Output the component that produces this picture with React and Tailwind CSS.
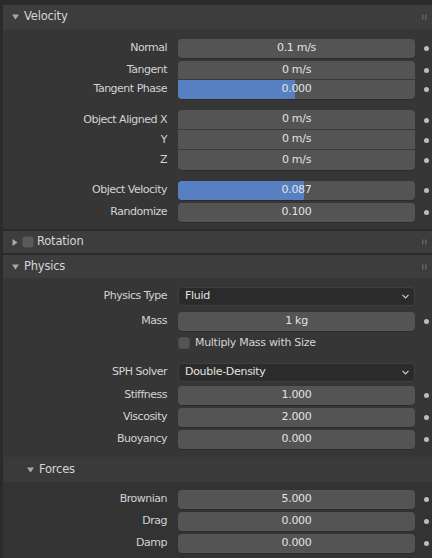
import React from "react";

const font = { fontFamily: '"DejaVu Sans", "Liberation Sans", sans-serif' };

function DownTri({ className = "" }) {
  return (
    <svg width="7" height="6" viewBox="0 0 7 6" className={className}>
      <polygon points="0,0.5 7,0.5 3.5,5.5" fill="#a8a8a8" />
    </svg>
  );
}
function RightTri() {
  return (
    <svg width="6" height="7" viewBox="0 0 6 7">
      <polygon points="0.5,0 5.5,3.5 0.5,7" fill="#a8a8a8" />
    </svg>
  );
}
function Grip() {
  return (
    <svg width="5" height="5" viewBox="0 0 5 5" className="absolute right-[2px]">
      {[0, 2, 4].map((y) =>
        [0, 3].map((x) => <rect key={x + "-" + y} x={x} y={y} width="1.5" height="1" fill="#8a8a8a" />)
      )}
    </svg>
  );
}
function Dot() {
  return <div className="w-[5px] h-[5px] rounded-full bg-[#bdbdbd] ml-[9px]" />;
}

function Header({ title, open = true, checkbox = false, h = "h-[24px]" }) {
  return (
    <div className={`relative flex items-center ${h} bg-[#3d3d3d] pl-[8px]`}>
      <div className="w-[8px] flex justify-center">{open ? <DownTri /> : <RightTri />}</div>
      {checkbox && <div className="ml-[3px] w-[12px] h-[12px] rounded-[3px] bg-[#5a5a5a] border border-[#4a4a4a]" />}
      <span className={`${checkbox ? "ml-[3px]" : "ml-[5px]"} text-[11.5px] tracking-[-0.2px] text-[#d6d6d6]`}>{title}</span>
      <div className="absolute right-[3px] top-1/2 -translate-y-1/2 w-[5px] h-[5px]">
        <Grip />
      </div>
    </div>
  );
}

function Label({ children }) {
  return <div className="w-[164px] text-right text-[11px] text-[#d4d4d4] tracking-[-0.5px] shrink-0">{children}</div>;
}

function Field({ value, fill, pos = "single", h = "h-[19px]" }) {
  const rounding =
    pos === "single" ? "rounded-[4px]" : pos === "top" ? "rounded-t-[4px]" : pos === "bottom" ? "rounded-b-[4px]" : "";
  const border = pos === "top" || pos === "mid" ? "border-b border-b-[#3a3a3a]" : "";
  return (
    <div className={`relative w-[237px] ${h} bg-[#545454] ${rounding} ${border} overflow-hidden shadow-[0_1px_0_#2c2c2c] flex items-center justify-center`}>
      {fill !== undefined && (
        <div className="absolute left-0 top-0 bottom-0 bg-[#5680c2]" style={{ width: fill }} />
      )}
      <span className="relative text-[11px] tracking-[-0.3px] text-[#e2e2e2]">{value}</span>
    </div>
  );
}

function Row({ label, value, fill, pos, mt = "", h }) {
  return (
    <div className={`flex items-center ${mt}`}>
      <Label>{label}</Label>
      <div className="ml-[11px]">
        <Field value={value} fill={fill} pos={pos} h={h} />
      </div>
      <Dot />
    </div>
  );
}

function Dropdown({ label, value, mt = "" }) {
  return (
    <div className={`flex items-center ${mt}`}>
      <Label>{label}</Label>
      <div className="ml-[11px] w-[237px] h-[19px] rounded-[4px] bg-[#2b2b2b] border border-[#3f3f3f] flex items-center justify-between pl-[6px] pr-[5px]">
        <span className="text-[11px] tracking-[-0.3px] text-[#e2e2e2]">{value}</span>
        <svg width="7" height="5" viewBox="0 0 7 5">
          <polyline points="0.5,0.8 3.5,3.8 6.5,0.8" fill="none" stroke="#cfcfcf" strokeWidth="1.2" />
        </svg>
      </div>
    </div>
  );
}

export default function App() {
  return (
    <div className="w-[432px] h-[558px] bg-[#2b2b2b] overflow-hidden pl-[3px] pt-[5px]" style={font}>
      {/* Velocity */}
      <Header title="Velocity" h="h-[24px]" />
      <div className="bg-[#363636] pt-[10px] pb-[7px]">
        <Row label="Normal" value="0.1 m/s" />
        <Row label="Tangent" value="0 m/s" pos="top" mt="mt-[3px]" h="h-[19px]" />
        <Row label="Tangent Phase" value="0.000" fill="117px" pos="bottom" h="h-[19px]" />
        <Row label="Object Aligned X" value="0 m/s" pos="top" mt="mt-[11px]" h="h-[20px]" />
        <Row label="Y" value="0 m/s" pos="mid" h="h-[20px]" />
        <Row label="Z" value="0 m/s" pos="bottom" h="h-[20px]" />
        <Row label="Object Velocity" value="0.087" fill="126px" mt="mt-[11px]" />
        <Row label="Randomize" value="0.100" mt="mt-[3px]" />
      </div>
      {/* Rotation */}
      <div className="mt-[2px]">
        <Header title="Rotation" open={false} checkbox h="h-[22px]" />
      </div>
      {/* Physics */}
      <div className="mt-[2px]">
        <Header title="Physics" h="h-[23px]" />
      </div>
      <div className="bg-[#363636] pt-[9px] pb-[8px]">
        <Dropdown label="Physics Type" value="Fluid" />
        <Row label="Mass" value="1 kg" mt="mt-[6px]" />
        <div className="flex items-center mt-[5px] h-[14px]">
          <div className="ml-[175px] w-[12px] h-[12px] rounded-[3px] bg-[#545454] border border-[#4a4a4a]" />
          <span className="ml-[5px] text-[11px] tracking-[-0.3px] text-[#d4d4d4]">Multiply Mass with Size</span>
        </div>
        <Dropdown label="SPH Solver" value="Double-Density" mt="mt-[13px]" />
        <Row label="Stiffness" value="1.000" mt="mt-[4px]" />
        <Row label="Viscosity" value="2.000" mt="mt-[3px]" />
        <Row label="Buoyancy" value="0.000" mt="mt-[3px]" />
      </div>
      {/* Forces subpanel */}
      <div className="relative flex items-center h-[25px] bg-[#3a3a3a] pl-[24px]">
        <DownTri />
        <span className="ml-[5px] text-[11.5px] tracking-[-0.2px] text-[#d6d6d6]">Forces</span>
      </div>
      <div className="bg-[#333333] pt-[8px] pb-[8px]">
        <Row label="Brownian" value="5.000" />
        <Row label="Drag" value="0.000" mt="mt-[3px]" />
        <Row label="Damp" value="0.000" mt="mt-[3px]" />
      </div>
    </div>
  );
}
